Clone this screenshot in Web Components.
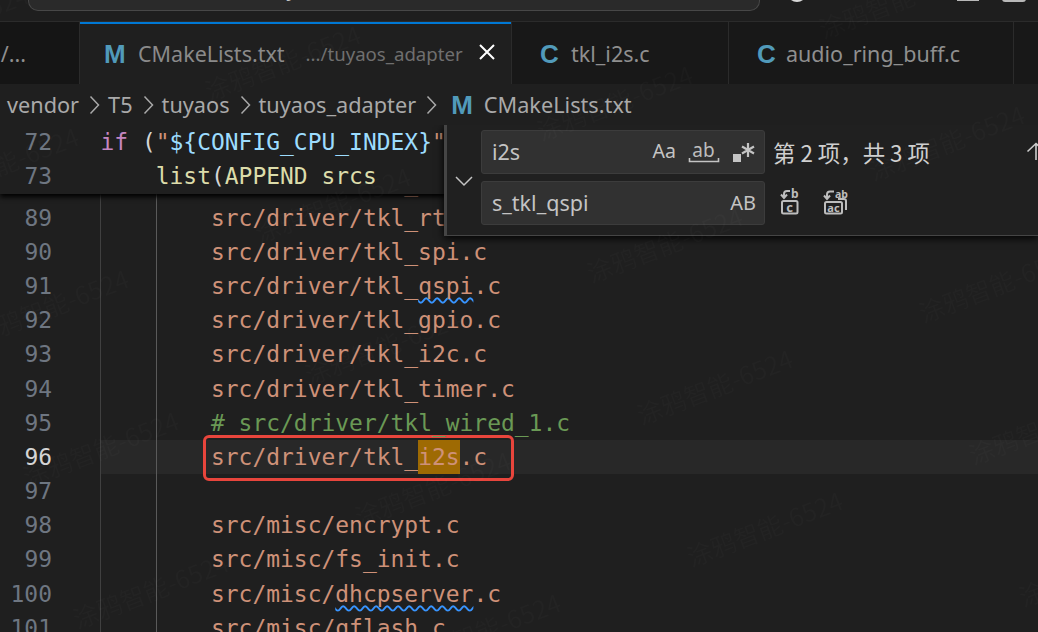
<!DOCTYPE html>
<html>
<head>
<meta charset="utf-8">
<style>
  html, body { margin:0; height:100%; background:#1f1f1f; overflow:hidden; }
  body { font-family:"Noto Sans","Noto Sans CJK SC",sans-serif; color:#ccc; }
</style>
</head>
<body>
<vs-window>
  <vs-titlebar></vs-titlebar>
  <vs-tabs></vs-tabs>
  <vs-crumbs></vs-crumbs>
  <vs-editor></vs-editor>
</vs-window>
<vs-watermark></vs-watermark>
<script>
const UI = '"Noto Sans","Noto Sans CJK SC",sans-serif';
const MONO = '"DejaVu Sans Mono","Liberation Mono",monospace';

class VsWindow extends HTMLElement {
  constructor() {
    super();
    this.attachShadow({ mode: 'open' }).innerHTML = `
      <style>
        :host { display:flex; flex-direction:column; width:1038px; height:632px; overflow:hidden; background:#1f1f1f; }
      </style>
      <slot></slot>`;
  }
}
customElements.define('vs-window', VsWindow);

class VsTitlebar extends HTMLElement {
  constructor() {
    super();
    this.attachShadow({ mode: 'open' }).innerHTML = `
      <style>
        :host { display:flex; height:22px; flex:none; box-sizing:border-box; background:#1e1e1e; border-bottom:1px solid #2b2b2b; overflow:hidden; align-items:flex-start; }
        .cmd { margin-left:28px; width:732px; height:11px; box-sizing:border-box; flex:none;
          border:1px solid #474747; border-top:0; border-radius:0 0 10px 10px; background:#2a2a2a;
          display:flex; align-items:flex-end; overflow:hidden; }
        .cmd span { font:21px/30px ${UI}; color:#c4c4c4; white-space:pre; height:30px; flex:none; margin-bottom:7px; }
        .c { width:20px; height:20px; margin:-18px 0 0 27px; background:#d8d8d8; border-radius:50%; flex:none; }
        .s { height:10px; flex:none; background:#b8b8b8; }
        .s1 { width:22px; margin:-9px 0 0 150px; }
        .s2 { width:24px; margin:-8px 0 0 23px; border-radius:3px; }
      </style>
      <div class="cmd"><span style="margin-left:153px">home,</span><span style="margin-left:18px">Tuya</span><span style="margin-left:66px;letter-spacing:.5px">[SSH: Ubuntu-22]</span></div>
      <div class="c"></div><div class="s s1"></div><div class="s s2"></div>`;
  }
}
customElements.define('vs-titlebar', VsTitlebar);

class VsTab extends HTMLElement {
  constructor() {
    super();
    this.attachShadow({ mode: 'open' }).innerHTML = `
      <style>
        :host { display:flex; align-items:center; box-sizing:border-box; height:100%; flex:none; padding-top:2px;
          border-right:1px solid #2b2b2b; background:#181818; color:#8f8f8f; padding-left:var(--pad,24px); font:21.5px/1 ${UI}; white-space:nowrap; }
        :host([active]) { background:#1f1f1f; color:#8a8a8a; box-shadow:inset 0 2px 0 #0078d4; }
        .ic { font:bold 26px/1 "Liberation Sans",sans-serif; color:#519aba; width:var(--ic,34px); flex:none; }
      </style>
      <span class="ic"><slot name="icon"></slot></span>
      <slot></slot>`;
  }
}
customElements.define('vs-tab', VsTab);

class VsTabs extends HTMLElement {
  constructor() {
    super();
    this.attachShadow({ mode: 'open' }).innerHTML = `
      <style>
        :host { display:flex; height:62px; flex:none; background:#181818; border-bottom:1px solid #2b2b2b; overflow:hidden; margin-bottom:-1px; }
        .clip { font:21.5px/1 ${UI}; color:#8f8f8f; width:80px; flex:none; box-sizing:border-box; border-right:1px solid #2b2b2b; padding-top:2px;
          display:flex; align-items:center; justify-content:flex-end; padding-right:53px; white-space:nowrap; background:#151515; overflow:hidden; }
        .desc { font-size:18.6px; color:#6f6f6f; margin-left:21px; }
        .x { margin-left:15px; width:18px; height:18px; display:block; margin-top:-4px; }
        .tail { flex:1; }
      </style>
      <div class="clip">p/...</div>
      <vs-tab active style="width:432px"><span slot="icon">M</span>CMakeLists.txt<span class="desc">.../tuyaos_adapter</span>
        <svg class="x" viewBox="0 0 18 18"><path d="M2 2L16 16M16 2L2 16" stroke="#fff" stroke-width="2" fill="none"/></svg>
      </vs-tab>
      <vs-tab style="width:217px;--pad:28px;--ic:31px"><span slot="icon">C</span>tkl_i2s.c</vs-tab>
      <vs-tab style="width:285px;--pad:28px;--ic:29px"><span slot="icon">C</span>audio_ring_buff.c</vs-tab>
      <div class="tail"></div>`;
  }
}
customElements.define('vs-tabs', VsTabs);

class VsCrumbs extends HTMLElement {
  constructor() {
    super();
    const chev = '<svg class="ch" viewBox="0 0 11 20"><path d="M1.5 1.5L9.5 10L1.5 18.5" stroke="#a9a9a9" stroke-width="1.5" fill="none"/></svg>';
    this.attachShadow({ mode: 'open' }).innerHTML = `
      <style>
        :host { display:flex; height:41px; flex:none; box-sizing:border-box; align-items:center; padding-left:7px; background:#1f1f1f;
          font:21.7px/1 ${UI}; color:#a9a9a9; white-space:nowrap; }
        .ch { width:11px; height:20px; margin:0 8px 0 10px; flex:none; }
        .m { font:bold 26px/1 "Liberation Sans",sans-serif; color:#519aba; margin:0 11px 0 6px; }
      </style>
      vendor${chev}T5${chev}tuyaos${chev}tuyaos_adapter${chev}<span class="m">M</span>CMakeLists.txt`;
  }
}
customElements.define('vs-crumbs', VsCrumbs);

class VsLine extends HTMLElement {
  constructor() {
    super();
    this.attachShadow({ mode: 'open' }).innerHTML = `<style>
        :host { display:block; height:34.2px; font:22.95px/34.2px ${MONO}; white-space:pre; color:#ce9178; }
        :host([current]) { background:linear-gradient(90deg,transparent 100px,#282828 100px); }
        .n { display:inline-block; width:52px; text-align:right; color:#6e7681; margin-right:48.5px; }
        :host([current]) .n { color:#d4d4d4; }
      </style><span class="n"></span><slot></slot>`;
  }
  connectedCallback() { this.shadowRoot.querySelector('.n').textContent = this.getAttribute('n'); }
}
customElements.define('vs-line', VsLine);

class VsEditor extends HTMLElement {
  constructor() {
    super();
    const row = (n, code, extra = '') => `<vs-line n="${n}" ${extra}>        ${code}</vs-line>`;
    this.attachShadow({ mode: 'open' }).innerHTML = `
      <style>
        :host { display:block; flex:1; position:relative; overflow:hidden; background:#1f1f1f; }
        .lines { padding-top:7.2px; position:relative; }
        .guide { position:absolute; top:0; bottom:0; width:1px; }
        .g1 { left:100px; background:#404040; }
        .g2 { left:156px; background:#5a5a5a; }
        .sticky { position:absolute; left:0; right:0; top:0; height:69px; background:#1f1f1f; box-shadow:0 3px 5px #000; z-index:2; }
        .sq { text-decoration:underline wavy #3794ff 1.7px; text-underline-offset:3px; text-decoration-skip-ink:none; }
        .hl { background:#9e6a03; display:inline-block; height:34.2px; }
        .cm { color:#6a9955; position:relative; z-index:2; }
        .kw { color:#c586c0; } .pn { color:#d4d4d4; } .st { color:#ce9178; } .vr { color:#9cdcfe; } .fn { color:#dcdcaa; }
        .box { position:absolute; left:203px; top:310px; width:311px; height:46px; box-sizing:border-box;
          border:3px solid #e8453c; border-radius:6px; z-index:1; }
      </style>
      <div class="lines">
        <div class="guide g1"></div><div class="guide g2"></div>
        ${row(87, 'src/driver/tkl_pwm.c')}
        ${row(88, 'src/driver/tkl_adc.c')}
        ${row(89, 'src/driver/tkl_rtc.c')}
        ${row(90, 'src/driver/tkl_spi.c')}
        ${row(91, 'src/driver/tkl_<span class="sq">qspi</span>.c')}
        ${row(92, 'src/driver/tkl_gpio.c')}
        ${row(93, 'src/driver/tkl_i2c.c')}
        ${row(94, 'src/driver/tkl_timer.c')}
        ${row(95, '<span class="cm"># src/driver/tkl_wired_1.c</span>')}
        ${row(96, 'src/driver/tkl_<span class="hl">i2s</span>.c', 'current')}
        ${row(97, '')}
        ${row(98, 'src/misc/encrypt.c')}
        ${row(99, 'src/misc/fs_init.c')}
        ${row(100, 'src/misc/<span class="sq">dhcpserver</span>.c')}
        ${row(101, 'src/misc/qflash.c')}
      </div>
      <div class="box"></div>
      <div class="sticky">
        <vs-line n="72"><span class="kw">if</span> <span class="pn">(</span><span class="st">"</span><span class="vr">\${CONFIG_CPU_INDEX}</span><span class="st">"</span></vs-line>
        <vs-line n="73">    <span class="fn">list</span><span class="pn">(</span><span class="fn">APPEND srcs</span></vs-line>
      </div>
      <vs-find></vs-find>`;
  }
}
customElements.define('vs-editor', VsEditor);

class VsFind extends HTMLElement {
  constructor() {
    super();
    this.attachShadow({ mode: 'open' }).innerHTML = `
      <style>
        :host { position:absolute; left:444px; right:0; top:0; height:111px; box-sizing:border-box; z-index:3; background:#202020;
          border-left:3px solid #454545; border-bottom:1px solid #454545; box-shadow:0 2px 8px #000;
          display:grid; grid-template-columns:34px 284px 1fr; grid-template-rows:44px 44px; row-gap:7px; padding-top:5px;
          font:21.5px/1 ${UI}; color:#ccc; }
        .tog { grid-row:1 / 3; display:flex; align-items:center; justify-content:center; padding-top:6px; }
        .inp { background:#313131; border:1px solid #3c3c3c; border-radius:3px; display:flex; align-items:center; box-sizing:border-box; padding-left:10px; color:#c4c4c4; }
        .inp .v { flex:1; }
        .op { font:19.5px/1 ${UI}; color:#c4c4c4; }
        .ab { font-size:20px; }
        .row { display:flex; align-items:center; white-space:nowrap; position:relative; }
        .count { font:22.4px/1 "Noto Sans CJK SC","Noto Sans",sans-serif; color:#cfcfcf; white-space:pre; margin-left:8px; }
        .up { position:absolute; left:261px; top:12px; }
        svg { display:block; flex:none; }
        svg text { font-family:${UI}; font-weight:bold; fill:#bdbdbd; }
        .ico { stroke:#bdbdbd; stroke-width:2; fill:none; }
      </style>
      <div class="tog"><svg width="20" height="12" viewBox="0 0 20 12"><path d="M2 2L10 10L18 2" stroke="#c4c4c4" stroke-width="1.5" fill="none"/></svg></div>
      <div class="inp"><span class="v">i2s</span>
        <span class="op" style="margin-right:12px;margin-top:-2px">Aa</span>
        <svg width="32" height="26" viewBox="0 0 32 26" style="margin-right:11px"><text x="15.5" y="18" text-anchor="middle" font-size="19" style="font-weight:normal">ab</text><path d="M1.5 19V22.5H30.5V19" stroke="#c4c4c4" stroke-width="1.6" fill="none"/></svg>
        <svg width="26" height="26" viewBox="0 0 26 26" style="margin-right:7px"><rect x="2" y="15" width="8" height="8" fill="#c4c4c4"/><path d="M17 4V18M11 7.5L23 14.5M23 7.5L11 14.5" stroke="#c4c4c4" stroke-width="2.2" fill="none"/></svg>
      </div>
      <div class="row"><span class="count">第 2 项，共 3 项</span>
        <svg class="up" width="20" height="18" viewBox="0 0 20 18"><path d="M10 18V1.5M1.5 9.5L10 1.5L18.5 9.5" stroke="#ccc" stroke-width="1.6" fill="none"/></svg>
      </div>
      <div class="inp"><span class="v">s_tkl_qspi</span><span class="op ab" style="margin-right:8px">AB</span></div>
      <div class="row" style="gap:23px;padding-left:15px;margin-top:-3px">
        <svg width="20" height="27" viewBox="0 0 20 27">
          <path class="ico" d="M10 3H7a3 3 0 0 0-3 3V10M1 6.5L4 10L7 6.5"/>
          <text x="11" y="10" font-size="12">b</text>
          <rect class="ico" x="2" y="13" width="15.5" height="12.5" rx="1.5"/>
          <text x="9.7" y="23.5" text-anchor="middle" font-size="13">c</text>
        </svg>
        <svg width="27" height="27" viewBox="0 0 27 27">
          <path class="ico" d="M11 3.5H7a3 3 0 0 0-3 3V11M1 7.5L4 11L7 7.5"/>
          <text x="12" y="9.5" font-size="10.5">ab</text>
          <rect class="ico" x="2" y="14" width="17" height="11.5" rx="1.5"/>
          <path class="ico" d="M15 11H21a2 2 0 0 1 2 2V22"/>
          <text x="10.5" y="23.5" text-anchor="middle" font-size="11">ac</text>
        </svg>
      </div>`;
  }
}
customElements.define('vs-find', VsFind);

class VsWatermark extends HTMLElement {
  constructor() {
    super();
    const root = this.attachShadow({ mode: 'open' });
    let spans = '';
    for (let i = -2; i <= 2; i++) {
      for (let j = -2; j <= 4; j++) {
        const x = 593 + i * 332 + j * 50, y = 287 + i * 40 + j * 142;
        if (x > 1040 || y < 0 || x < -200 || y > 720) continue;
        spans += `<span style="left:${x}px;top:${y - 30}px">涂鸦智能-6524</span>`;
      }
    }
    root.innerHTML = `
      <style>
        :host { position:fixed; inset:0; display:block; pointer-events:none; overflow:hidden; z-index:9; }
        span { position:absolute; font:25px/30px "Noto Sans CJK SC","Noto Sans",sans-serif; color:rgba(255,255,255,.02); white-space:nowrap;
          transform:rotate(-21deg); transform-origin:0 100%; }
      </style>${spans}`;
  }
}
customElements.define('vs-watermark', VsWatermark);
</script>
</body>
</html>
